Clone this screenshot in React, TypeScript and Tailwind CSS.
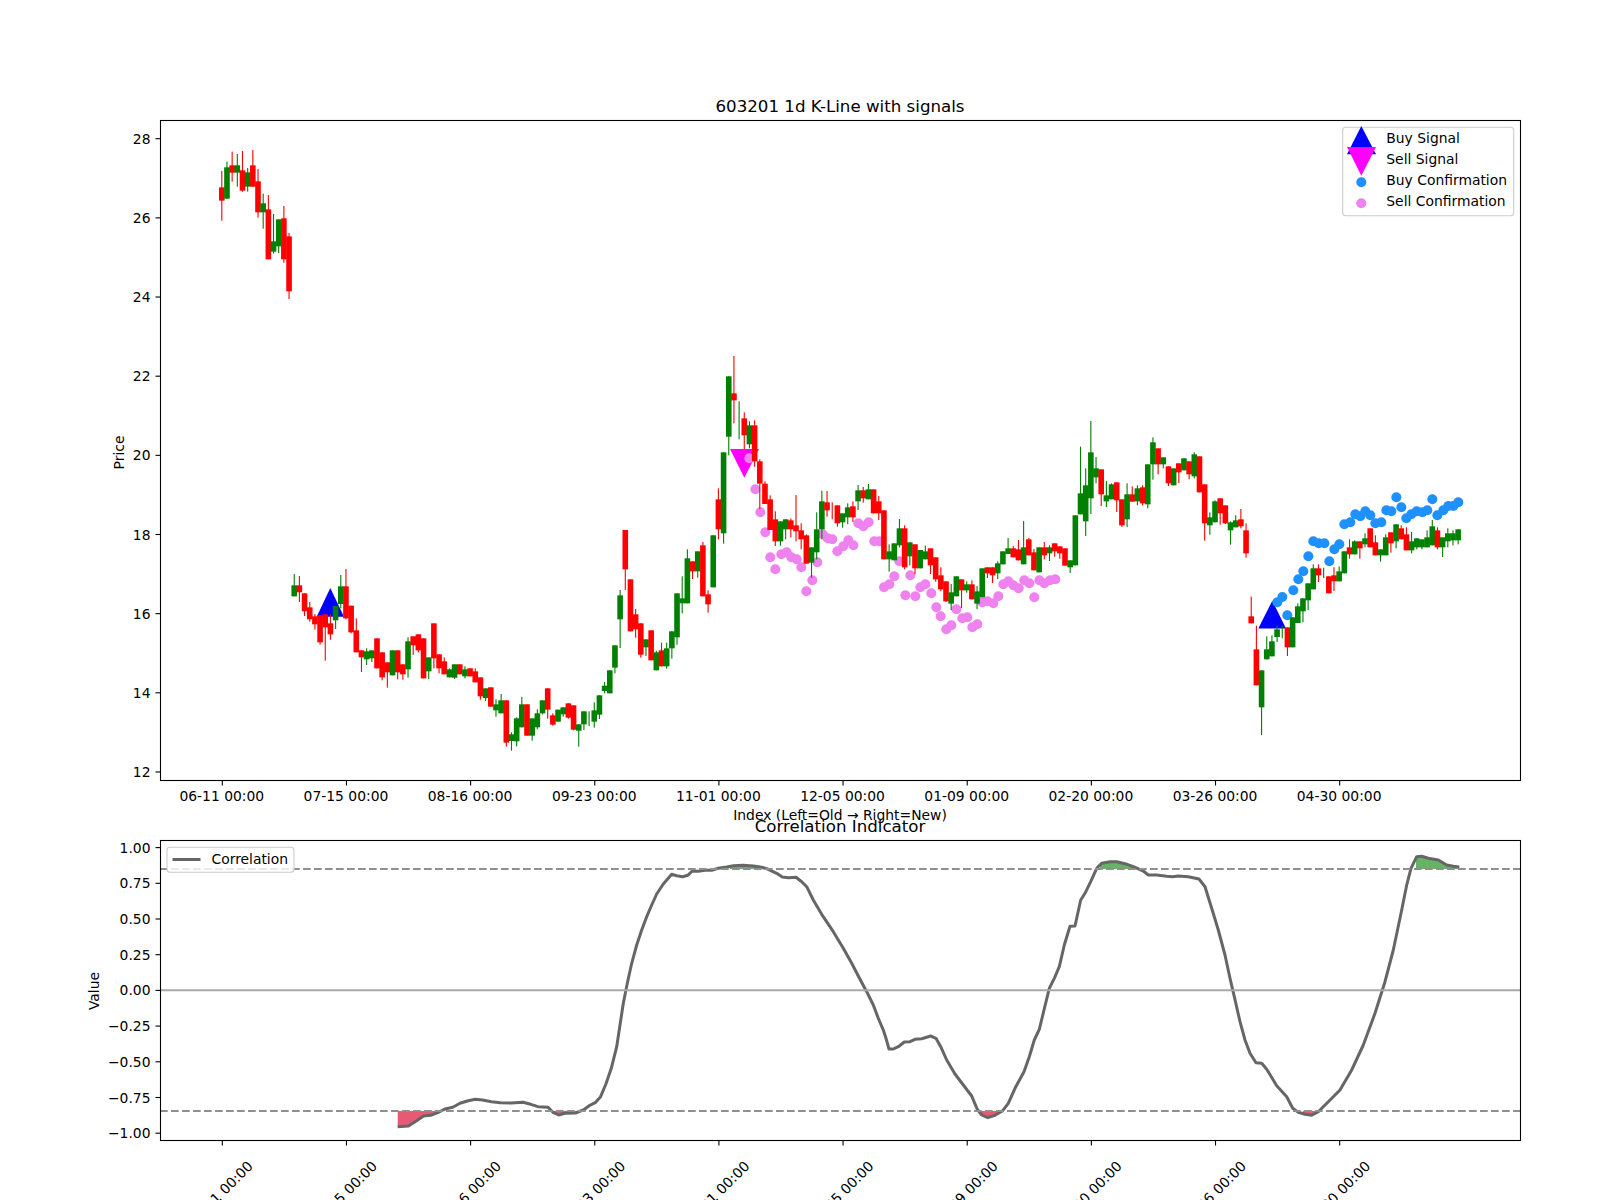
type Row = [string, number, number, number, number];

const X0 = 221.8;
const STEP = 5.173;
const xAt = (i: number) => X0 + STEP * i;

const rows1: Row[] = [
  ["r", 183, 232, 272, 332], ["g", 155, 172, 266, 266], ["r", 125, 166, 188, 215], ["g", 132, 166, 188, 230],
  ["r", 123, 181, 242, 245], ["g", 174, 187, 230, 245], ["r", 120, 166, 230, 230], ["r", 177, 214, 307, 323],
  ["g", 251, 280, 307, 356], ["r", 255, 298, 448, 448], ["g", 312, 394, 425, 431], ["g", 328, 328, 409, 429],
  ["r", 288, 325, 448, 458], ["r", 369, 379, 544, 567],
];

const rows2: Row[] = [
  ["g", 42, 76, 109, 109], ["r", 48, 76, 97, 126], ["r", 100, 100, 154, 168], ["r", 126, 142, 178, 185],
  ["r", 162, 169, 193, 209], ["r", 166, 166, 247, 254], ["r", 163, 163, 202, 302], ["r", 163, 190, 223, 239],
  ["g", 138, 138, 181, 207], ["g", 45, 79, 132, 145], ["r", 27, 79, 175, 178], ["r", 137, 137, 217, 220],
  ["r", 175, 211, 277, 277], ["r", 271, 271, 292, 336], ["g", 265, 274, 298, 315], ["g", 271, 271, 295, 306],
  ["r", 235, 235, 325, 325], ["r", 277, 277, 352, 361], ["r", 307, 307, 337, 383], ["g", 271, 271, 346, 346],
  ["r", 271, 271, 337, 358], ["r", 313, 313, 343, 359], ["g", 232, 244, 328, 353], ["r", 229, 229, 256, 285],
  ["r", 223, 223, 271, 277], ["r", 235, 235, 355, 355], ["g", 292, 292, 334, 357], ["r", 190, 190, 295, 325],
  ["r", 283, 283, 325, 340], ["r", 292, 304, 343, 343], ["g", 325, 328, 352, 352], ["g", 313, 313, 353, 357],
  ["r", 313, 313, 343, 343], ["g", 319, 328, 349, 355], ["r", 325, 325, 349, 349], ["r", 325, 334, 367, 367],
  ["r", 352, 352, 409, 419], ["g", 385, 385, 414, 423], ["r", 382, 382, 440, 440], ["g", 418, 433, 451, 470],
  ["g", 402, 421, 460, 460], ["r", 421, 421, 548, 560], ["g", 517, 523, 543, 572], ["g", 472, 475, 544, 559],
  ["g", 411, 433, 502, 502], ["r", 433, 433, 527, 527], ["g", 475, 475, 527, 542], ["g", 448, 460, 502, 508],
  ["g", 421, 421, 460, 463], ["r", 385, 385, 449, 476], ["r", 460, 466, 494, 497], ["g", 449, 449, 485, 485],
  ["g", 442, 442, 463, 470], ["r", 430, 430, 473, 476], ["r", 436, 436, 509, 511], ["g", 493, 493, 512, 560],
  ["g", 454, 454, 493, 510], ["g", 454, 476, 476, 498], ["g", 427, 451, 485, 503], ["g", 406, 406, 464, 477],
];

const rows3: Row[] = [
  ["g", 1026, 1037, 1053, 1060], ["g", 990, 991, 1060, 1060], ["g", 916, 916, 983, 1000], ["g", 750, 766, 838, 924],
  ["r", 570, 570, 688, 750], ["r", 718, 718, 874, 874], ["r", 807, 823, 868, 893], ["r", 850, 850, 944, 953],
  ["g", 898, 898, 922, 948], ["r", 871, 871, 961, 961], ["g", 932, 937, 991, 991], ["r", 908, 931, 979, 979],
  ["g", 908, 925, 979, 986], ["g", 874, 874, 925, 956], ["g", 760, 760, 892, 914], ["g", 709, 775, 790, 820],
  ["g", 628, 655, 790, 790], ["r", 664, 664, 694, 717], ["g", 634, 634, 694, 713], ["r", 606, 616, 769, 769],
  ["r", 751, 763, 793, 818], ["g", 586, 586, 742, 742], ["r", 445, 478, 568, 598], ["g", 337, 337, 580, 611],
  ["g", 109, 109, 290, 346], ["r", 48, 160, 181, 250], ["g", 184, 240, 240, 298], ["r", 217, 235, 286, 328],
  ["g", 244, 256, 313, 325], ["r", 241, 256, 364, 380], ["r", 358, 364, 431, 507], ["r", 424, 431, 492, 492],
  ["r", 466, 478, 570, 570], ["r", 514, 538, 604, 618], ["g", 544, 544, 604, 617], ["g", 538, 538, 568, 598],
  ["r", 535, 541, 568, 592], ["r", 465, 556, 574, 604], ["r", 550, 571, 598, 628], ["r", 583, 586, 671, 671],
  ["g", 622, 622, 668, 713], ["g", 517, 568, 637, 658], ["g", 452, 484, 568, 598], ["r", 453, 487, 511, 530],
  ["r", 487, 510, 510, 538], ["r", 496, 496, 550, 560], ["g", 520, 520, 547, 563], ["g", 490, 502, 532, 553],
  ["r", 484, 499, 532, 546], ["g", 435, 451, 484, 510], ["r", 441, 451, 475, 488], ["g", 432, 448, 478, 478],
  ["r", 448, 448, 520, 520], ["r", 468, 484, 520, 540], ["r", 511, 511, 658, 658], ["g", 613, 634, 658, 695],
  ["g", 610, 610, 661, 661], ["g", 537, 565, 616, 622], ["r", 556, 565, 682, 688], ["g", 607, 607, 649, 676],
  ["r", 613, 613, 685, 703],
];

const rows4: Row[] = [
  ["g", 450, 450, 505, 505], ["g", 437, 454, 478, 478], ["r", 445, 445, 496, 522], ["r", 472, 472, 538, 545],
  ["r", 502, 526, 568, 574], ["r", 544, 544, 604, 606], ["g", 552, 577, 611, 630], ["g", 529, 529, 589, 589],
  ["r", 538, 538, 571, 624], ["g", 544, 553, 571, 578], ["r", 541, 553, 598, 598], ["g", 558, 574, 611, 627],
  ["g", 505, 505, 592, 592], ["r", 502, 502, 520, 534], ["r", 502, 502, 526, 549], ["g", 484, 490, 520, 537],
  ["g", 454, 454, 493, 493], ["g", 414, 445, 462, 462], ["r", 438, 445, 472, 472], ["r", 420, 448, 481, 481],
  ["g", 363, 442, 493, 493], ["r", 414, 418, 466, 466], ["r", 447, 457, 511, 511], ["g", 442, 442, 517, 517],
  ["r", 426, 442, 466, 478], ["g", 436, 442, 460, 483], ["r", 430, 430, 454, 470], ["r", 439, 439, 460, 476],
  ["r", 445, 445, 497, 497], ["g", 481, 481, 502, 519], ["g", 346, 346, 496, 496], ["g", 140, 280, 343, 343],
  ["g", 205, 256, 364, 408], ["g", 63, 157, 295, 342], ["g", 171, 205, 232, 250], ["r", 208, 208, 283, 318],
  ["g", 243, 286, 304, 321], ["g", 250, 253, 298, 298], ["r", 247, 247, 301, 336], ["r", 298, 298, 376, 381],
  ["g", 250, 283, 358, 381], ["r", 259, 283, 305, 305], ["g", 256, 265, 304, 316], ["r", 256, 262, 310, 316],
  ["g", 193, 193, 313, 325], ["g", 112, 127, 193, 239], ["r", 145, 145, 193, 223], ["g", 172, 172, 193, 205],
  ["r", 199, 199, 250, 258], ["g", 205, 205, 256, 256], ["r", 190, 190, 217, 249], ["g", 175, 175, 211, 211],
  ["r", 184, 184, 223, 238], ["g", 157, 163, 229, 235], ["r", 169, 169, 277, 277], ["r", 253, 253, 370, 422],
  ["g", 337, 352, 376, 404], ["g", 301, 304, 367, 367], ["r", 295, 295, 340, 374], ["r", 316, 316, 370, 372],
  ["g", 364, 367, 391, 434], ["g", 346, 361, 382, 382], ["r", 327, 358, 379, 385], ["r", 370, 391, 460, 473],
];

const rows5: Row[] = [
  ["r", 380, 439, 460, 460], ["r", 467, 538, 646, 646], ["g", 601, 601, 712, 795], ["g", 499, 538, 568, 568],
  ["g", 496, 514, 559, 559], ["g", 467, 478, 501, 516], ["g", 467, 485, 485, 505], ["r", 472, 472, 532, 558],
  ["g", 442, 442, 532, 532], ["g", 400, 409, 459, 459], ["g", 385, 385, 424, 457], ["g", 340, 340, 391, 420],
  ["g", 283, 295, 358, 358], ["r", 283, 295, 316, 336], ["g", 293, 308, 308, 324], ["r", 319, 319, 370, 370],
  ["r", 292, 316, 334, 363], ["g", 289, 304, 334, 334], ["g", 244, 244, 310, 310], ["r", 208, 232, 253, 266],
  ["g", 211, 214, 253, 253], ["r", 214, 214, 235, 266], ["g", 190, 205, 223, 232], ["r", 175, 175, 232, 232],
  ["r", 196, 217, 256, 256], ["g", 238, 238, 256, 275], ["g", 193, 202, 256, 256], ["r", 187, 187, 220, 248],
  ["g", 163, 163, 214, 235], ["r", 166, 175, 208, 208], ["r", 172, 193, 241, 241], ["g", 186, 214, 241, 250],
  ["g", 205, 205, 232, 238], ["g", 208, 208, 232, 238], ["g", 181, 202, 232, 232], ["g", 150, 169, 226, 226],
  ["r", 172, 181, 232, 238], ["g", 202, 202, 232, 261], ["g", 175, 190, 214, 232], ["g", 181, 190, 211, 226],
  ["g", 178, 178, 211, 223],
];

const segments: { oy: number; start: number; rows: Row[] }[] = [
  { oy: 110, start: 0, rows: rows1 },
  { oy: 560, start: 14, rows: rows2 },
  { oy: 340, start: 74, rows: rows3 },
  { oy: 400, start: 135, rows: rows4 },
  { oy: 470, start: 199, rows: rows5 },
];

const candles = segments.flatMap((s) =>
  s.rows.map((r, n) => ({
    x: xAt(s.start + n),
    color: r[0] === "g" ? "#008000" : "#ff0000",
    wickTop: s.oy + r[1] / 3,
    top: s.oy + r[2] / 3,
    bottom: s.oy + r[3] / 3,
    wickBottom: s.oy + r[4] / 3,
  })),
);

const sellDots = [
  ...[
    [448, 355], [466, 448], [481, 517], [496, 577], [511, 652], [526, 688], [544, 643], [560, 637], [574, 652],
    [590, 658], [604, 682], [619, 754], [637, 721], [652, 667], [668, 583], [683, 595], [697, 598], [712, 634],
    [730, 619], [745, 601], [760, 616], [775, 550], [790, 559], [806, 547], [823, 604], [838, 604], [852, 742],
    [868, 733], [883, 709], [898, 664], [916, 766], [931, 706], [946, 769], [961, 742], [976, 733], [994, 760],
    [1009, 802], [1022, 829],
  ].map(([x, y]) => [600 + x / 3, 340 + y / 3]),
  ...[
    [79, 688], [94, 676], [109, 628], [127, 655], [142, 652], [157, 682], [172, 673], [187, 607], [202, 604],
    [220, 610], [235, 589], [250, 553], [265, 544], [280, 556], [296, 565], [313, 541], [328, 550], [343, 592],
    [358, 541], [373, 550], [390, 541], [406, 538],
  ].map(([x, y]) => [920 + x / 3, 400 + y / 3]),
];

const buyDots = [
  [142, 397], [157, 381], [172, 436], [190, 361], [205, 328], [220, 304], [235, 259], [250, 214], [266, 220],
  [283, 220], [298, 274], [313, 238], [328, 223], [343, 163], [361, 157], [376, 133], [391, 139], [406, 124],
  [421, 136], [436, 160], [454, 157], [469, 121], [484, 124], [499, 82], [514, 112], [529, 145], [544, 133],
  [560, 124], [577, 127], [592, 121], [607, 88], [622, 136], [640, 121], [655, 108], [670, 108], [685, 97],
].map(([x, y]) => [1230 + x / 3, 470 + y / 3]);

// correlation line, read off three crops of the lower panel
const corr = [
  ...[
    [888, 1070], [918, 1068], [940, 1053], [960, 1038], [980, 1036], [1000, 1028], [1020, 1017], [1042, 1012],
    [1062, 1000], [1085, 992], [1105, 988], [1125, 990], [1150, 995], [1175, 998], [1205, 999], [1238, 997],
    [1260, 1003], [1280, 1010], [1308, 1012], [1322, 1027], [1338, 1035], [1355, 1030], [1385, 1029], [1410, 1018],
    [1425, 1006], [1440, 998], [1455, 980], [1470, 942], [1485, 895], [1500, 830],
  ].map(([x, y]) => [80 + x / 2.795, 770 + y / 3]),
  ...[
    [10, 700], [22, 640], [35, 580], [50, 525], [65, 480], [80, 440], [95, 405], [110, 372], [130, 342], [155, 313],
    [170, 317], [188, 320], [203, 316], [217, 303], [235, 304], [255, 301], [275, 301], [295, 295], [320, 291],
    [340, 287], [370, 286], [400, 288], [425, 292], [445, 298], [470, 310], [487, 321], [505, 323], [528, 322],
    [545, 335], [560, 350], [580, 390], [605, 433], [640, 485], [670, 535], [695, 580], [720, 628], [740, 665],
    [760, 705], [775, 745], [790, 780], [798, 805], [807, 837], [820, 837], [835, 830], [853, 816], [870, 815],
    [885, 808], [905, 806], [932, 798], [948, 805], [962, 830], [980, 870], [1005, 912], [1030, 945], [1055, 978],
    [1072, 1018], [1085, 1035], [1103, 1043], [1125, 1036], [1148, 1022], [1165, 1000], [1185, 955], [1212, 905],
    [1228, 860], [1243, 810], [1258, 778], [1272, 720], [1288, 655], [1303, 625], [1318, 590], [1333, 525],
    [1350, 469], [1365, 468], [1382, 390], [1395, 370], [1412, 335], [1430, 295], [1445, 280], [1470, 275],
  ].map(([x, y]) => [620 + x / 3, 770 + y / 3]),
  ...[
    [50, 275], [75, 281], [100, 290], [130, 303], [145, 315], [170, 315], [200, 319], [218, 320], [235, 318],
    [265, 320], [297, 327], [315, 350], [335, 415], [355, 480], [375, 555], [390, 625], [403, 680], [420, 755],
    [435, 810], [450, 850], [468, 878], [485, 880], [500, 898], [530, 947], [560, 980], [578, 1015], [595, 1027],
    [615, 1033], [635, 1036], [655, 1025], [685, 995], [720, 960], [755, 900], [790, 825], [825, 730], [855, 635],
    [880, 540], [905, 420], [920, 345], [933, 295], [950, 260], [965, 259], [985, 265], [1015, 270], [1040, 285],
    [1060, 289], [1078, 291],
  ].map(([x, y]) => [1100 + x / 3, 770 + y / 3]),
];

const corrLine = corr.map(([x, y]) => `${x.toFixed(1)},${y.toFixed(1)}`).join(" ");
const firstX = corr[0][0];
const lastX = corr[corr.length - 1][0];

const dates = [
  "06-11 00:00", "07-15 00:00", "08-16 00:00", "09-23 00:00", "11-01 00:00",
  "12-05 00:00", "01-09 00:00", "02-20 00:00", "03-26 00:00", "04-30 00:00",
];
const xTicks = dates.map((label, i) => ({ label, x: xAt(i * 24) + 0.5 }));
const priceTicks = [28, 26, 24, 22, 20, 18, 16, 14, 12].map((p) => ({
  label: String(p),
  y: 138.7 + (28 - p) * 39.58,
}));
const valueTicks = ["1.00", "0.75", "0.50", "0.25", "0.00", "−0.25", "−0.50", "−0.75", "−1.00"].map((label, i) => ({
  label,
  y: 847.6 + i * 35.7,
}));

export default function App() {
  return (
    <div className="w-[1600px] h-[1200px] bg-white">
      <svg
        width={1600}
        height={1200}
        viewBox="0 0 1600 1200"
        className="block font-['DejaVu_Sans',sans-serif] text-[13.89px] fill-black"
      >
        <defs>
          <clipPath id="greenZone">
            <rect x={730} y={840} width={28} height={29} />
            <rect x={1100} y={840} width={34} height={29} />
            <rect x={1416} y={840} width={44} height={29} />
          </clipPath>
          <clipPath id="redZone">
            <rect x={397} y={1111} width={40} height={28} />
            <rect x={552} y={1111} width={24} height={28} />
            <rect x={981} y={1111} width={18} height={28} />
            <rect x={1303} y={1111} width={16} height={28} />
          </clipPath>
        </defs>

        {/* price panel */}
        <polygon points="330.3,588 316.7,616.7 344,616.7" fill="#0000ff" />
        <polygon points="1272.3,600.7 1258.3,628.5 1286,628.5" fill="#0000ff" />
        <polygon points="730,449 759,449 744.3,477.7" fill="#ff00ff" />
        {sellDots.map(([x, y], i) => (
          <circle key={i} cx={x} cy={y} r={5} fill="#ee82ee" />
        ))}
        {buyDots.map(([x, y], i) => (
          <circle key={i} cx={x} cy={y} r={5} fill="#1e90ff" />
        ))}
        {candles.map((c, i) => (
          <g key={i} fill={c.color}>
            <rect x={c.x - 2.8} y={c.top} width={5.6} height={c.bottom - c.top} />
            <rect x={c.x - 0.55} y={c.wickTop} width={1.1} height={c.wickBottom - c.wickTop} />
          </g>
        ))}

        <rect x={160.5} y={120.5} width={1360} height={660} fill="none" stroke="#000" strokeWidth={1.1} />
        {xTicks.map((t) => (
          <g key={t.label}>
            <line x1={t.x} x2={t.x} y1={781} y2={785.5} stroke="#000" strokeWidth={1.1} />
            <text x={t.x - 0.5} y={800.8} textAnchor="middle">{t.label}</text>
          </g>
        ))}
        {priceTicks.map((t) => (
          <g key={t.label}>
            <line x1={155.5} x2={160} y1={t.y} y2={t.y} stroke="#000" strokeWidth={1.1} />
            <text x={150.5} y={t.y + 5} textAnchor="end">{t.label}</text>
          </g>
        ))}
        <text x={840} y={112} textAnchor="middle" className="text-[16.67px]">603201 1d K-Line with signals</text>
        <text x={840} y={820} textAnchor="middle">Index (Left=Old → Right=New)</text>
        <text transform="translate(124,452.5) rotate(-90)" textAnchor="middle">Price</text>

        {/* legend of the price panel */}
        <rect x={1342.7} y={127.3} width={171} height={88.4} rx={3} fill="#ffffff" fillOpacity={0.8} stroke="#cccccc" strokeWidth={1.1} />
        <polygon points="1361.3,126 1347,154.3 1376,154.3" fill="#0000ff" />
        <polygon points="1347,147 1376,147 1361.3,175.7" fill="#ff00ff" />
        <circle cx={1361.3} cy={182.3} r={5} fill="#1e90ff" />
        <circle cx={1361.3} cy={203.3} r={5} fill="#ee82ee" />
        <text x={1386.3} y={143}>Buy Signal</text>
        <text x={1386.3} y={164}>Sell Signal</text>
        <text x={1386.3} y={185.3}>Buy Confirmation</text>
        <text x={1386.3} y={206}>Sell Confirmation</text>

        {/* correlation panel */}
        <polygon
          points={`${corrLine} ${lastX},869 ${firstX},869`}
          fill="#008000"
          fillOpacity={0.6}
          clipPath="url(#greenZone)"
        />
        <polygon
          points={`${corrLine} ${lastX},1111 ${firstX},1111`}
          fill="#dc143c"
          fillOpacity={0.7}
          clipPath="url(#redZone)"
        />
        <polyline points={corrLine} fill="none" stroke="#666666" strokeWidth={3} strokeLinejoin="round" />
        <line x1={160} x2={1520} y1={869} y2={869} stroke="#8f8f8f" strokeWidth={2.1} strokeDasharray="7.7 3.3" />
        <line x1={160} x2={1520} y1={1111} y2={1111} stroke="#8f8f8f" strokeWidth={2.1} strokeDasharray="7.7 3.3" />
        <line x1={160} x2={1520} y1={990.2} y2={990.2} stroke="#a8a8a8" strokeWidth={2} />

        <rect x={160.5} y={840.5} width={1360} height={300} fill="none" stroke="#000" strokeWidth={1.1} />
        {xTicks.map((t) => (
          <g key={t.label}>
            <line x1={t.x} x2={t.x} y1={1141} y2={1145.5} stroke="#000" strokeWidth={1.1} />
            <text transform={`translate(${t.x - 2},1193.5) rotate(-45)`} y={5} textAnchor="middle">{t.label}</text>
          </g>
        ))}
        {valueTicks.map((t) => (
          <g key={t.label}>
            <line x1={155.5} x2={160} y1={t.y} y2={t.y} stroke="#000" strokeWidth={1.1} />
            <text x={150.5} y={t.y + 5} textAnchor="end">{t.label}</text>
          </g>
        ))}
        <text x={840} y={832} textAnchor="middle" className="text-[16.67px]">Correlation Indicator</text>
        <text transform="translate(99,991) rotate(-90)" textAnchor="middle">Value</text>

        {/* legend of the correlation panel */}
        <rect x={167} y={847.3} width={127} height={25} rx={3} fill="#ffffff" fillOpacity={0.8} stroke="#cccccc" strokeWidth={1.1} />
        <line x1={172.5} x2={200.5} y1={859.5} y2={859.5} stroke="#666666" strokeWidth={3} />
        <text x={211.5} y={863.5}>Correlation</text>
      </svg>
    </div>
  );
}
